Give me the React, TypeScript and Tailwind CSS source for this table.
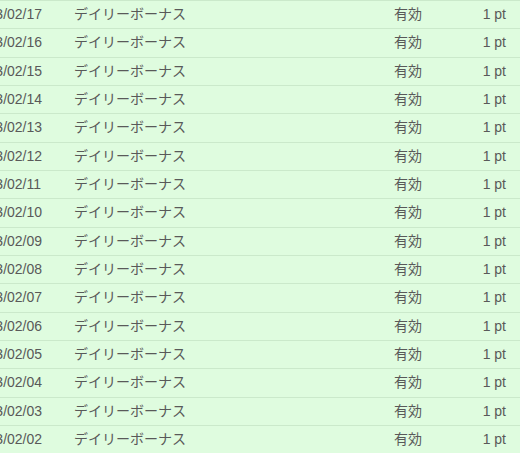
const dates = [
  "2023/02/17",
  "2023/02/16",
  "2023/02/15",
  "2023/02/14",
  "2023/02/13",
  "2023/02/12",
  "2023/02/11",
  "2023/02/10",
  "2023/02/09",
  "2023/02/08",
  "2023/02/07",
  "2023/02/06",
  "2023/02/05",
  "2023/02/04",
  "2023/02/03",
  "2023/02/02",
];

const App = () => {
  return (
    <div className="w-[520px] h-[453px] overflow-hidden bg-[#dffcdf]">
      <div
        className="-ml-[28px] w-[548px] text-[14px] text-[#595959]"
        style={{ fontFamily: '"Liberation Sans", "Noto Sans CJK JP", sans-serif' }}
      >
        {/* Point history rows */}
        {dates.map((date) => (
          <div
            key={date}
            className="h-[28.33px] border-t border-[#cbe9cb] grid grid-cols-[102px_320px_60px_1fr] items-center"
          >
            <span>{date}</span>
            <span>デイリーボーナス</span>
            <span>有効</span>
            <span className="text-right pr-[14px]">1 pt</span>
          </div>
        ))}
      </div>
    </div>
  );
};

export default App;
